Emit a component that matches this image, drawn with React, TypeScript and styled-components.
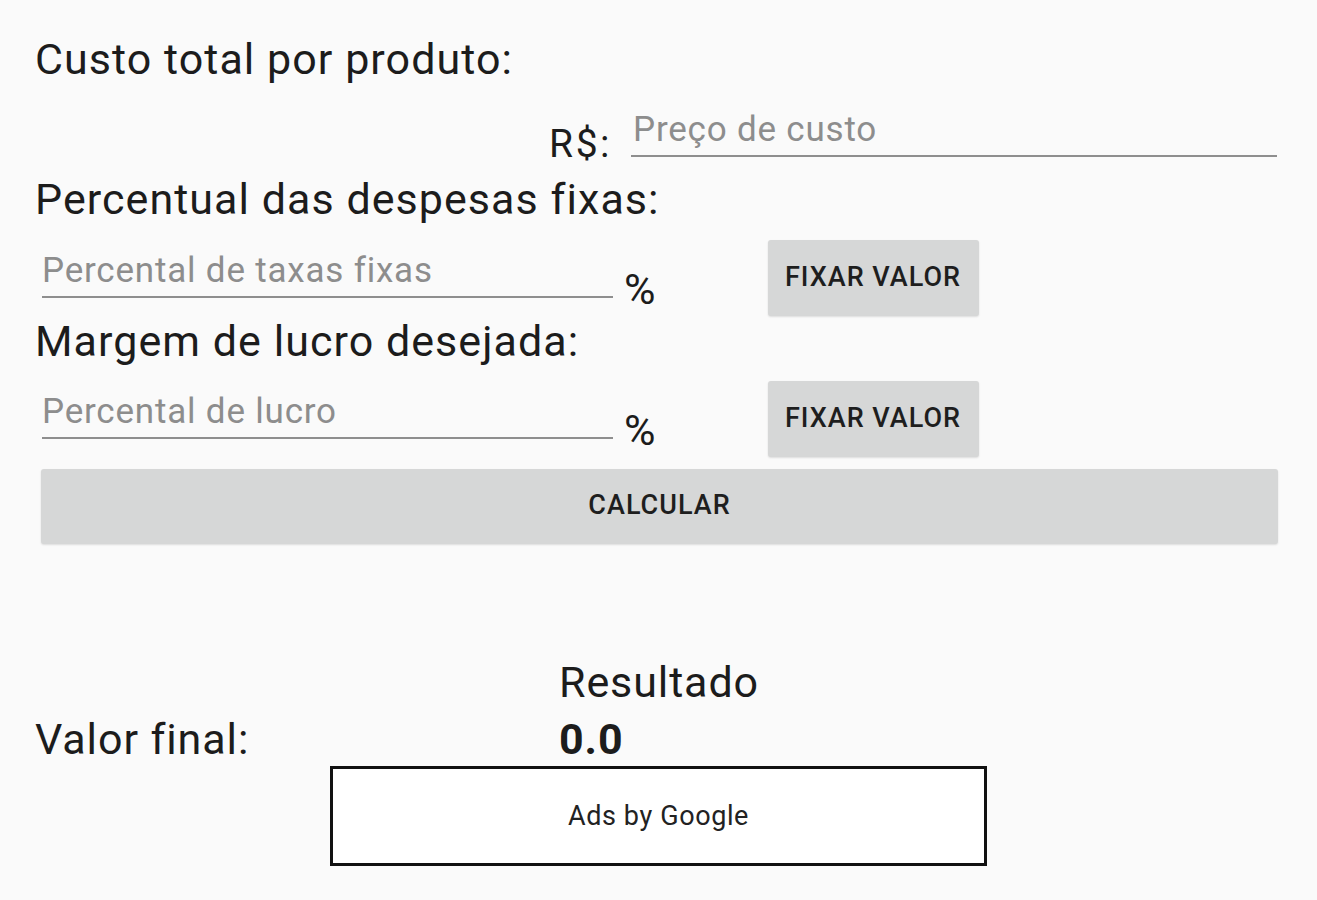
import styled, { createGlobalStyle } from "styled-components";

const GlobalStyle = createGlobalStyle`
  html, body {
    margin: 0;
    padding: 0;
    background: #fafafa;
  }
  body {
    font-family: Roboto, "Liberation Sans", sans-serif;
    color: #1c1c1c;
  }
`;

const Page = styled.div`
  width: 1317px;
  min-height: 900px;
  box-sizing: border-box;
  padding: 34px 40px 0 35px;
  display: flex;
  flex-direction: column;
`;

const Heading = styled.div`
  font-size: 43px;
  line-height: 50px;
  letter-spacing: 1.05px;
  color: #1c1c1c;
`;

const CostRow = styled.div`
  display: flex;
  justify-content: flex-end;
  align-items: flex-end;
  margin-top: 25px;
`;

const Currency = styled.span`
  font-size: 39px;
  line-height: 40px;
  letter-spacing: 2.5px;
  margin-right: 19px;
`;

const TextInput = styled.input<{ $width: number; $offset?: number }>`
  width: ${(p) => p.$width}px;
  height: 48px;
  box-sizing: border-box;
  margin: 0 0 ${(p) => p.$offset ?? 0}px 0;
  padding: 0 0 6px 2px;
  border: none;
  border-bottom: 2px solid #8e8e8e;
  background: transparent;
  outline: none;
  font-family: Roboto, "Liberation Sans", sans-serif;
  font-size: 35px;
  letter-spacing: 0.8px;
  color: #1c1c1c;

  &::placeholder {
    color: #8d8d8d;
  }
`;

const FieldRow = styled.div<{ $top: number }>`
  display: flex;
  align-items: flex-start;
  margin-top: ${(p) => p.$top}px;
`;

const FieldInput = styled(TextInput)`
  margin-top: 10px;
  margin-left: 7px;
  padding-left: 0;
`;

const Percent = styled.span`
  font-size: 43px;
  line-height: 50px;
  margin: 24px 0 0 11px;
`;

const FixButton = styled.button`
  width: 211px;
  height: 76px;
  margin-left: 112px;
  border: none;
  border-radius: 3px;
  background: #d6d7d7;
  box-shadow: 0 1px 2px rgba(0, 0, 0, 0.12);
  font-family: Roboto, "Liberation Sans", sans-serif;
  font-weight: 500;
  font-size: 27px;
  letter-spacing: 1px;
  color: #1e1e1e;
  padding: 0 0 3px;
`;

const CalcButton = styled(FixButton)`
  width: auto;
  height: 75px;
  margin: 12px -1px 0 6px;
`;

const ResultGrid = styled.div`
  display: grid;
  grid-template-columns: 524px auto;
  row-gap: 7px;
  margin-top: 113px;
  font-size: 43px;
  line-height: 50px;
  letter-spacing: 0.9px;
`;

const ResultTitle = styled.div`
  grid-column: 2;
`;

const ResultValue = styled.div`
  font-weight: 700;
`;

const AdBox = styled.div`
  width: 657px;
  height: 100px;
  box-sizing: border-box;
  margin: 2px 0 0 295px;
  border: 3px solid #111;
  background: #fff;
  display: flex;
  align-items: center;
  justify-content: center;
  font-size: 27px;
  letter-spacing: 0.6px;
  color: #222;
`;

export default function App() {
  return (
    <>
      <GlobalStyle />
      <Page>
        <Heading>Custo total por produto:</Heading>
        <CostRow>
          <Currency>R$:</Currency>
          <TextInput $width={646} $offset={7} placeholder="Preço de custo" />
        </CostRow>

        <Heading style={{ marginTop: 10 }}>Percentual das despesas fixas:</Heading>
        <FieldRow $top={16}>
          <FieldInput $width={571} placeholder="Percental de taxas fixas" />
          <Percent>%</Percent>
          <FixButton>FIXAR VALOR</FixButton>
        </FieldRow>

        <Heading>Margem de lucro desejada:</Heading>
        <FieldRow $top={15}>
          <FieldInput $width={571} placeholder="Percental de lucro" />
          <Percent>%</Percent>
          <FixButton>FIXAR VALOR</FixButton>
        </FieldRow>

        <CalcButton>CALCULAR</CalcButton>

        <ResultGrid>
          <ResultTitle>Resultado</ResultTitle>
          <div>Valor final:</div>
          <ResultValue>0.0</ResultValue>
        </ResultGrid>

        <AdBox>Ads by Google</AdBox>
      </Page>
    </>
  );
}
